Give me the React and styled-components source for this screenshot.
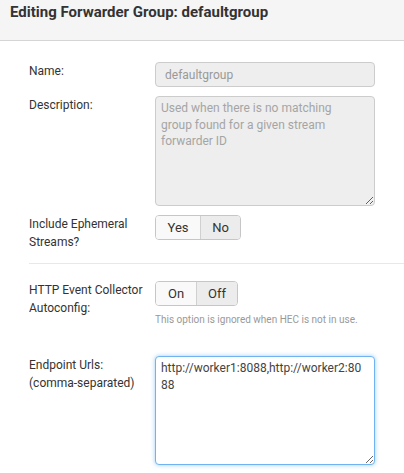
import React from "react";
import styled, { createGlobalStyle } from "styled-components";

const Global = createGlobalStyle`
  html, body { margin: 0; padding: 0; background: #fff; }
  body { font-family: Roboto, "Noto Sans", Arial, sans-serif; color: #333; }
  * { box-sizing: border-box; }
`;

const Page = styled.div`
  width: 404px;
  height: 473px;
  overflow: hidden;
  background: #fff;
`;

const Header = styled.div`
  height: 41px;
  background: #f5f5f5;
  border-bottom: 1px solid #d5d5d5;
  padding: 2px 10px 0;
`;

const Title = styled.h3`
  margin: 0;
  font-size: 15px;
  line-height: 20px;
  font-weight: 700;
  color: #333;
`;

const Form = styled.div`
  padding: 21px 0 0 29px;
  display: flex;
  flex-direction: column;
`;

const Row = styled.div`
  display: grid;
  grid-template-columns: 126px 220px;
  align-items: start;
  margin-bottom: ${(p) => p.$mb ?? 8}px;
`;

const Label = styled.div`
  font-size: 12px;
  line-height: 18px;
  color: #333;
`;

const TextInput = styled.input`
  width: 220px;
  height: 25px;
  border: 1px solid #ccc;
  border-radius: 4px;
  background: #eee;
  color: #999;
  font: 12px Roboto, sans-serif;
  padding: 0 9px;
`;

const TextArea = styled.textarea`
  display: block;
  width: 220px;
  height: ${(p) => p.$h}px;
  border: 1px solid ${(p) => (p.$focus ? "#6fb4f0" : "#ccc")};
  border-radius: 4px;
  background: ${(p) => (p.$disabled ? "#eee" : "#fff")};
  color: ${(p) => (p.$disabled ? "#a5a5a5" : "#444")};
  font: 12px/16.5px Roboto, sans-serif;
  padding: 3px 11px 3px 5px;
  word-break: ${(p) => (p.$breakAll ? "break-all" : "normal")};
  resize: vertical;
  outline: none;
  box-shadow: ${(p) => (p.$focus ? "0 0 4px rgba(90,170,240,0.6)" : "none")};
`;

const Toggle = styled.div`
  display: inline-flex;
  justify-self: start;
  align-self: start;
  height: 25px;
  border: 1px solid #c6c6c6;
  border-radius: 4px;
  overflow: hidden;
`;

const ToggleBtn = styled.button`
  width: ${(p) => p.$w}px;
  height: 100%;
  border: none;
  border-left: ${(p) => (p.$first ? "none" : "1px solid #d0d0d0")};
  background: ${(p) => (p.$active ? "#ececec" : "#f9f9f9")};
  font: 13px Roboto, sans-serif;
  color: #333;
  padding: 0;
  cursor: pointer;
`;

const Field = styled.div`
  display: flex;
  flex-direction: column;
  align-items: flex-start;
`;

const Hint = styled.div`
  font-size: 10px;
  line-height: 12px;
  color: #999;
  margin-top: 8px;
`;

const Divider = styled.div`
  height: 1px;
  background: #e8e8e8;
  margin: 0 0 17px 0;
`;

export default function App() {
  return (
    <Page>
      <Global />
      <Header>
        <Title>Editing Forwarder Group: defaultgroup</Title>
      </Header>
      <Form>
        <Row $mb={9}>
          <Label>Name:</Label>
          <TextInput value="defaultgroup" disabled readOnly />
        </Row>
        <Row $mb={9}>
          <Label>Description:</Label>
          <TextArea
            $h={110}
            $disabled
            disabled
            readOnly
            value="Used when there is no matching group found for a given stream forwarder ID"
          />
        </Row>
        <Row $mb={12}>
          <Label>
            Include Ephemeral
            <br />
            Streams?
          </Label>
          <Toggle>
            <ToggleBtn $w={44} $first>Yes</ToggleBtn>
            <ToggleBtn $w={40} $active>No</ToggleBtn>
          </Toggle>
        </Row>
        <Divider />
        <Row $mb={30}>
          <Label>
            HTTP Event Collector
            <br />
            Autoconfig:
          </Label>
          <Field>
            <Toggle>
              <ToggleBtn $w={40} $first>On</ToggleBtn>
              <ToggleBtn $w={41} $active>Off</ToggleBtn>
            </Toggle>
            <Hint>This option is ignored when HEC is not in use.</Hint>
          </Field>
        </Row>
        <Row>
          <Label>
            Endpoint Urls:
            <br />
            (comma-separated)
          </Label>
          <TextArea
            $h={109}
            $focus
            $breakAll
            readOnly
            value="http://worker1:8088,http://worker2:8088"
          />
        </Row>
      </Form>
    </Page>
  );
}
